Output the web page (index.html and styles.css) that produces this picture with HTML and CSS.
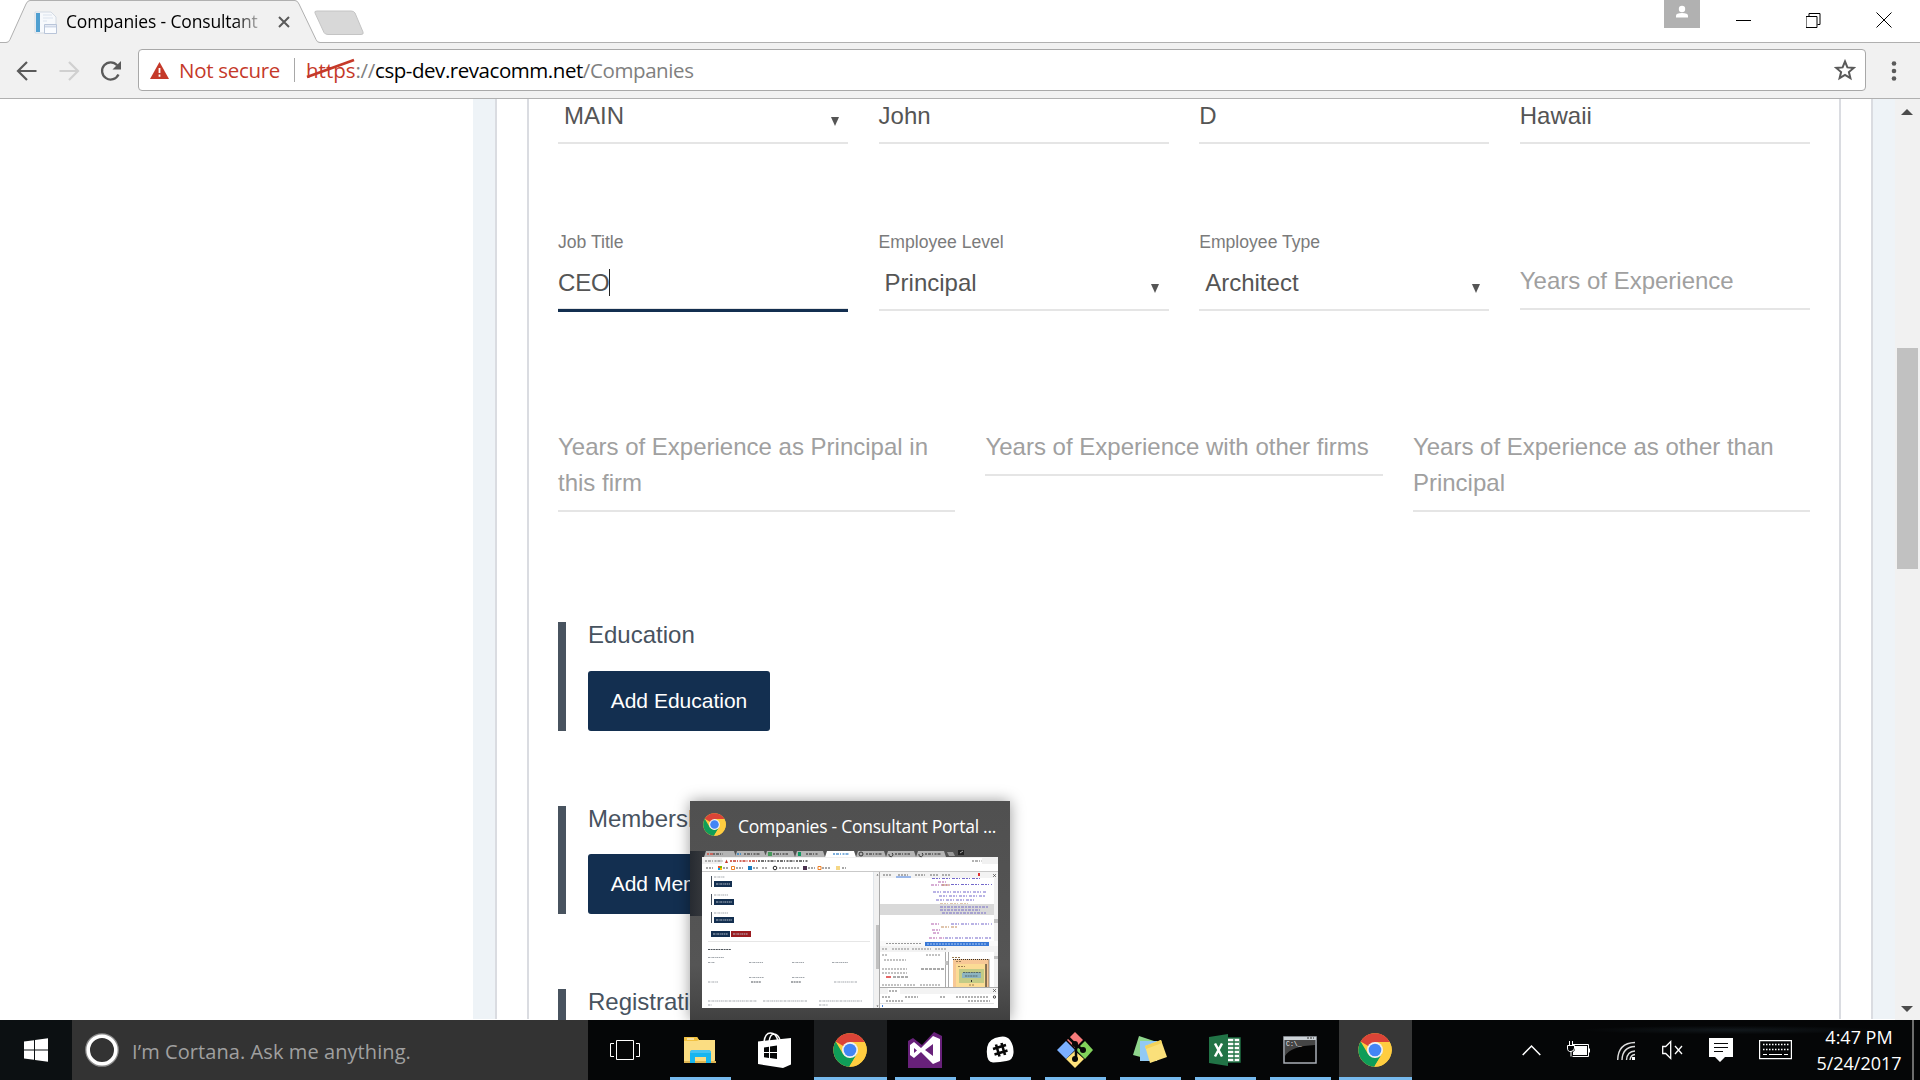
FILE: index.html
```html
<!DOCTYPE html>
<html lang="en">
<head>
<meta charset="utf-8">
<title>Companies - Consultant Portal</title>
<link rel="stylesheet" href="styles.css">
</head>
<body>
<svg class="defs" width="0" height="0" aria-hidden="true">
  <symbol id="chrome" viewBox="0 0 34 34">
    <circle cx="17" cy="17" r="16.7" fill="#ffcd40"/>
    <path d="M17 17 2.6 8.6A16.7 16.7 0 0 1 31.7 9H17z" fill="#db4437"/>
    <path d="M2.6 8.6 10.2 21.3 17 25 24 21 16.3 33.7A16.7 16.7 0 0 1 2.6 8.6z" fill="#0f9d58"/>
    <path d="M17 9h14.7a16.7 16.7 0 0 1-15.4 24.7L23.9 21z" fill="#ffcd40"/>
    <circle cx="17" cy="17" r="8" fill="#f1f1f1"/>
    <circle cx="17" cy="17" r="6.3" fill="#4285f4"/>
  </symbol>
</svg>

<header class="browser">
  <div class="tabstrip">
    <div class="tab">
      <svg class="tab-shape" width="320" height="43"><path d="M0 42.5H6q3 0 4-3L26 4q1.500-3.500 4-3.500H295q2.500 0 4 3.500L316 39.500q1 3 4 3V43H0z" fill="#f1f1f1"/><path d="M0 42.500H6q3 0 4-3L26 4q1.500-3.500 4-3.500H295q2.500 0 4 3.500L316 39.500q1 3 4 3" fill="none" stroke="#b0b0b0"/></svg>
      <svg class="favicon" width="24" height="24"><path d="M1 1h16l5 5v16H1z" fill="#f7f9fc" stroke="#d3dae3"/><path d="M2 2h4v19H2z" fill="#4f9fd0"/><path d="M9 4h9M9 7h10M9 10h4" stroke="#dbe3ee"/><path d="M10.500 13.500h12v9h-12z" fill="#fafcff" stroke="#b9c5d9"/><path d="M11 15.500h11" stroke="#d0d9e8" stroke-width="2"/></svg>
      <span class="tab-title">Companies - Consultant</span>
      <svg class="tab-close" width="12" height="12"><path d="M1 1l10 10M11 1L1 11" stroke="#5a5a5a" stroke-width="2"/></svg>
    </div>
    <svg class="newtab" width="52" height="26"><path d="M3 1H37q3 0 4 2L49 22q1 2.500-2 2.500H14q-3 0-4-2L1 3q-1-2 2-2z" fill="#d8d8d8" stroke="#c4c4c4"/></svg>
    <div class="window-controls">
      <svg class="profile" width="36" height="28"><path d="M0 0h36v28H0z" fill="#b1b1b1"/><circle cx="18" cy="9" r="3.200" fill="#fff"/><path d="M12 17v-1.500q0-2.500 6-2.500t6 2.500V17.500H12z" fill="#fff"/></svg>
      <svg width="16" height="16"><path d="M0 8.500h15" stroke="#000"/></svg>
      <svg width="16" height="16"><path d="M.5 4.500h11v11H.5zM3.500 4V1.500h11v11H12" transform="translate(-.5 0)" fill="none" stroke="#000"/></svg>
      <svg width="16" height="16"><path d="M.5.500l15 15M15.500.500l-15 15" stroke="#000"/></svg>
    </div>
  </div>
  <div class="toolbar">
    <svg class="nav" width="22" height="22"><path d="M20.500 11H2.500M11 2l-9 9 9 9" fill="none" stroke="#5a5a5a" stroke-width="2.200"/></svg>
    <svg class="nav" width="22" height="22"><path d="M1.500 11h18M11 2l9 9-9 9" fill="none" stroke="#d0d0d0" stroke-width="2.200"/></svg>
    <svg class="nav" width="22" height="22"><path d="M18.500 14.500A8.600 8.600 0 1 1 17.200 5.300" fill="none" stroke="#5a5a5a" stroke-width="2.300"/><path d="M21 1v8.500h-8.500z" fill="#5a5a5a"/></svg>
    <div class="omnibox">
      <svg class="warn" width="19" height="17"><path d="M9.500 0 19 17H0z" fill="#c53929"/><path d="M9.500 6v5M9.500 12.500v2.200" stroke="#fff" stroke-width="1.800"/></svg>
      <span class="not-secure">Not secure</span>
      <span class="divider"></span>
      <span class="url"><span class="scheme">https<svg class="strike" width="50" height="22"><path d="M1 19 48 2" stroke="#c53929" stroke-width="2.800"/></svg></span><span class="slashes">://</span><span class="host">csp-dev.revacomm.net</span><span class="path">/Companies</span></span>
      <svg class="star" width="22" height="22"><path d="M11 2.500l2.400 5.900 6.400.500-4.900 4.100 1.500 6.200L11 15.900l-5.400 3.300 1.500-6.200L2.200 8.900l6.400-.500z" fill="none" stroke="#5a5a5a" stroke-width="2"/></svg>
    </div>
    <svg class="menu" width="6" height="20"><circle cx="3" cy="2.500" r="2.300"/><circle cx="3" cy="10" r="2.300"/><circle cx="3" cy="17.500" r="2.300"/></svg>
  </div>
</header>

<main class="viewport">
  <div class="page">
    <div class="panel">
      <div class="card">
        <div class="row four first">
          <div class="field select"><span class="value">MAIN</span><i class="arrow"></i></div>
          <div class="field"><span class="value">John</span></div>
          <div class="field"><span class="value">D</span></div>
          <div class="field"><span class="value">Hawaii</span></div>
        </div>
        <div class="row four second">
          <div><label>Job Title</label><div class="field focus"><span class="value caret">CEO</span></div></div>
          <div><label>Employee Level</label><div class="field select"><span class="value">Principal</span><i class="arrow"></i></div></div>
          <div><label>Employee Type</label><div class="field select"><span class="value">Architect</span><i class="arrow"></i></div></div>
          <div class="field empty unlabeled">Years of Experience</div>
        </div>
        <div class="row three">
          <div class="field empty">Years of Experience as Principal in this firm</div>
          <div class="field empty">Years of Experience with other firms</div>
          <div class="field empty">Years of Experience as other than Principal</div>
        </div>
        <section class="group education"><h3>Education</h3><button>Add Education</button></section>
        <section class="group"><h3>Memberships</h3><button>Add Membership</button></section>
        <section class="group"><h3>Registrations</h3></section>
      </div>
    </div>
  </div>
  <div class="scrollbar">
    <i class="up"></i><div class="thumb"></div><i class="down"></i>
  </div>
</main>

<aside class="preview">
  <div class="preview-head"><svg width="23" height="23"><use href="#chrome"/></svg><span>Companies - Consultant Portal ...</span></div>
  <svg class="thumbnail" width="296" height="158" viewBox="0 0 296 158">
    <path d="M2 7 4 1H32l2 6zM33 7l2-6H62l2 6zM63 7l2-6H91l2 6zM93 7l2-6h26l2 6zM154 7l2-6h26l2 6zM184 7l2-6h26l2 6zM214 7l2-6h26l2 6z" fill="#b4b4b4"/>
    <path d="M245 2h6l2 4h-6z" fill="#999"/><path d="M256 0h6v5h-6z" fill="#222"/><path d="M258 3l3-2" stroke="#aaa"/>
    <path d="M123 7l2-6h27l2 6h142v151H0V7z" fill="#fff"/>
    <path d="M0 7h296v7H0z" fill="#f1f1f1"/><path d="M20 8h260v6H20z" fill="#fff"/>
    <g stroke-width="1.500" stroke-dasharray="2 1 3 1 1 1.500">
      <path d="M11 4h10M42 4h16M71 4h15M104 4h12M164 4h16M193 4h15M223 4h16" stroke="#555"/>
      <path d="M5 4h6" stroke="#d04b40"/><path d="M35 4h4" stroke="#2d7fc1"/><path d="M131 4h16" stroke="#5597d2"/>
      <path d="M28 11h18M47 11h8" stroke="#c53929"/><path d="M56 11h50" stroke="#444"/><path d="M3 11h18M270 11h10" stroke="#999"/>
    </g>
    <path d="M66 2h4v4h-4z" fill="#46985a"/><path d="M96 2h3v4h-3z" fill="#0e9960"/><path d="M157 4a2 2 0 1 0 4 0 2 2 0 1 0-4 0M187 4a2 2 0 1 0 3-1M217 4a2 2 0 1 0 3-1" fill="none" stroke="#333"/>
    <path d="M23 13l1.500-3.500L26 13z" fill="#c53929"/>
    <path d="M16 16h2v2h-2z" fill="#f25022"/><path d="M18 16h2v2h-2z" fill="#7fba00"/><path d="M16 18h2v2h-2z" fill="#00a4ef"/><path d="M18 18h2v2h-2z" fill="#ffb900"/>
    <path d="M29.500 16.500h3v3h-3zM116 16.500h3v3h-3z" fill="none" stroke="#ef7f23"/><path d="M46 16h4v4h-4z" fill="#1679be"/><path d="M101 16h4v4h-4z" fill="#49304d"/><path d="M134 16h4v4h-4z" fill="#f5d785"/><circle cx="73" cy="18" r="1.800" fill="none" stroke="#222"/>
    <path d="M4 18h7M21 18h5M34 18h7M51 18h5M60 18h6M77 18h21M106 18h7M120 18h8M140 18h4" stroke="#8a8a8a" stroke-width="1.500" stroke-dasharray="2 1"/>
    <path d="M0 21.500h296" stroke="#c9c9c9"/>
    <path d="M171 22h6v136h-6z" fill="#f1f1f1"/><path d="M174 75h3v44h-3z" fill="#c1c1c1"/><path d="M175.500 24l1 1.500h-2zM175.500 157l1-1.500h-2z" fill="#555"/>
    <path d="M171.500 22v136" stroke="#e0e5ea"/><path d="M177.500 22v136" stroke="#aaa"/>
    <path d="M9.500 26v11M9.500 44v11M9.500 62v11" stroke="#48515d"/>
    <path d="M12 31h18v6H12zM12 49h20v6H12zM12 67h20v6H12zM9 81h19v6H9z" fill="#132f50"/><path d="M29 81h20v6H29z" fill="#9b1c20"/>
    <path d="M14 34h14M14 52h16M14 70h16M11 84h15M31 84h15" stroke="#b5bec9" stroke-width="1" stroke-dasharray="2 .6 1 .6"/>
    <path d="M12 27h11M12 45h14M12 63h14M6 107.500h16M6 112.500h7M47 112.500h14M90 112.500h12M130 112.500h16M47 127.500h15M90 127.500h13M6 132h10M132 132h23M6 151h49M61 151h44M117 151h43M6 155h4M117 155h9" stroke="#a3a8ad" stroke-width="1.200" stroke-dasharray="2 .6 1 .6"/>
    <path d="M6 99.500h23M49 132h10M89 132h10" stroke="#50565c" stroke-width="1.200" stroke-dasharray="2 .6"/>
    <path d="M6 91.500h162" stroke="#e6e6e6"/>
    <path d="M178 22h118v6H178z" fill="#f3f3f3"/><path d="M181 25h8M196 25h10M213 25h10M228 25h9M240 25h8" stroke="#666" stroke-width="1.200" stroke-dasharray="2 1"/><path d="M194 27h15" stroke="#427ce0"/><path d="M276 23h2v3h-2z" fill="#d33"/><path d="M291 24l3 3M294 24l-3 3" stroke="#333" stroke-width=".6"/>
    <g stroke-width="1.200" stroke-dasharray="3 1 2 1 1 2">
      <path d="M230 28.500h48M249 34.500h41M231 42h54M237 46h46M234 50h40M249 74h41M243 88h46" stroke="#7469cb"/>
      <path d="M229 35h20M236 32h9M229 74h8M230 80h8M231 83h7M227 88h15M230 94h6" stroke="#b25fac"/>
      <path d="M240 35h8M238 54h30M239 77h16M248 92h20" stroke="#bf8c5c"/>
    </g>
    <path d="M178 54h114v11H178z" fill="#d9d9d9"/>
    <path d="M238 57h49M238 60h40M240 63h44" stroke="#766cc7" stroke-width="1.200" stroke-dasharray="3 1 2 1"/>
    <path d="M292 28h4v64h-4z" fill="#f1f1f1"/><path d="M292 69h4v4h-4z" fill="#c1c1c1"/>
    <path d="M178 91h118v5H178z" fill="#fafafa"/><path d="M223 92h64v4h-64z" fill="#3878d6"/><path d="M225 94h60" stroke="#a9c7f3" stroke-dasharray="2 1"/><path d="M184 93.500h36" stroke="#999" stroke-dasharray="2 1"/>
    <path d="M178 96h118v6H178z" fill="#f3f3f3"/><path d="M180 99h6M190 99h17M210 99h19M233 99h12M180 105h5M224 105h14M182 110h22M180 119h25M180 123h25M180 135h19M202 135h12M218 135h20" stroke="#858585" stroke-width="1.200" stroke-dasharray="2 1"/>
    <path d="M184 127h5" stroke="#d33" stroke-width="1.500"/><path d="M191 127h16M219 119h23" stroke="#555" stroke-dasharray="3 1"/>
    <path d="M246.500 102v35M243.500 102v35M178 137.500h118" stroke="#aaa"/><path d="M243 111h3v4h-3z" fill="#c1c1c1"/>
    <path d="M251 109h36v28h-36z" fill="#f7c796"/><path d="M251 109.500h36V137" fill="none" stroke="#333" stroke-dasharray="1 1"/><path d="M254 114h30v23h-30z" fill="#fbdc95"/><path d="M284 114v23" stroke="#111"/><path d="M257 119h25v14h-25z" fill="#c2cb86"/><path d="M260 123h19v5h-19z" fill="#8cb4c0"/><path d="M261 122.500h18M263 126h13" stroke="#52676e" stroke-dasharray="2 .6"/><path d="M250 107.500h8M256 116.500h7M254 111.500h5M267 135h5" stroke="#9a7b51" stroke-dasharray="2 1"/><path d="M269.500 130v2" stroke="#333"/>
    <path d="M292 102h4v35h-4z" fill="#f1f1f1"/><path d="M292 106h4v3h-4z" fill="#c1c1c1"/>
    <path d="M178 138h118v6H178z" fill="#f3f3f3"/><path d="M186 138h12v6h-12z" fill="#fff"/><path d="M187 141h9M180 147h8M203 147h13M238 147h6M254 147h32M266 151h22M184 151h18" stroke="#666" stroke-width="1.200" stroke-dasharray="2 1"/><path d="M178 153.500h114" stroke="#e0e0e0"/><path d="M180 155l1 1-1 1" fill="none" stroke="#3878d6"/><path d="M291 139l3 3M294 139l-3 3" stroke="#333" stroke-width=".6"/><circle cx="292.500" cy="147" r="1.200" fill="none" stroke="#444"/>
  </svg>
</aside>

<footer class="taskbar">
  <div class="start"><svg width="24" height="24"><path d="M0 3.500 10 2.200V11.500H0zM11 2 24 .3V11.500H11zM0 12.500h10v9.300L0 20.400zM11 12.500h13v11.300L11 22z" fill="#fff"/></svg></div>
  <div class="cortana"><svg width="34" height="34"><circle cx="17" cy="17" r="15.600" fill="none" stroke="#8d8d8d" stroke-width="2.500"/><circle cx="17" cy="17" r="13.800" fill="none" stroke="#fff" stroke-width="3.600"/></svg><span>I’m Cortana. Ask me anything.</span></div>
  <div class="apps">
    <div class="app"><svg width="30" height="20"><path d="M6.500.500h17v19h-17zM4 3.500H.500v13H4M26 3.500h3.500v13H26" fill="none" stroke="#fff"/></svg></div>
    <div class="app open"><svg width="34" height="30"><path d="M1 3q0-1 1-1h12l2 3h16v20q0 2-2 2H1z" fill="#fbdd82"/><path d="M1 6V3q0-1 1-1h12l2 3-2 1z" fill="#f3c242"/><path d="M4 4h7" stroke="#fff"/><path d="M1 26h32v2H1z" fill="#dfb653"/><path d="M7 28V18q0-3 3-3h15q3 0 3 3v10h-5v-6H12v6z" fill="#17b5ef"/><path d="M7 18q0-3 3-3h15q3 0 3 3z" fill="#46c2f2"/></svg></div>
    <div class="app"><svg width="33" height="36"><path d="M0 9.500 33 6v26.500L25 36 0 32z" fill="#fff"/><path d="M6 10Q7 1 12.500 1T20 9M11 10Q12 2 16 2t6 6" fill="none" stroke="#fff" stroke-width="1.500"/><path d="M6 15.500l5-.700V20H6zM12 14.500l7-1V20h-7zM6 21h5v5l-5-.700zM12 21h7v6l-7-1z" fill="#050607"/></svg></div>
    <div class="app open wide"><svg width="34" height="34"><use href="#chrome"/></svg></div>
    <div class="app open"><svg width="34" height="36"><path d="M0 9l5-3 9 7L26 0l8 4v32H0z" fill="#68217a"/><path d="M2 13l4-3 7 6L25 4l7 3v22l-7 3-12-12-7 6-4-3zm4 3v5l3-2.500zM25 12l-8 6 8 6z" fill="#fff" fill-rule="evenodd"/></svg></div>
    <div class="app open"><svg width="28" height="28"><path d="M9 2Q20-2 24 4t3.500 13-7 8-13 1.500T.8 16 9 2z" fill="#fff"/><path d="M10 8.500l3.500 12M15.500 7l3.500 12M7 13l13-4M8.500 18.500l13-4" stroke="#080808" stroke-width="2.600"/></svg></div>
    <div class="app open"><svg width="36" height="36"><path d="M18 0l8 8-8 8-8-8z" fill="#f77b7b"/><path d="M28 9l8 9-8 9-9-9z" fill="#82d35b"/><path d="M18 19l9 8-9 9-9-9z" fill="#ffe27b"/><path d="M9 9l9 9-9 9-9-9z" fill="#7cb0ff"/><path d="M11 5l8 8v15M18 12l8 6" fill="none" stroke="#080808" stroke-width="2.500"/><circle cx="18" cy="12" r="3" fill="#080808"/><circle cx="18" cy="27" r="3" fill="#080808"/><circle cx="26" cy="18" r="3" fill="#080808"/></svg></div>
    <div class="app open"><svg width="34" height="28"><path d="M6 0l15 5-6 18L0 19z" fill="#8fd58c"/><path d="M7 5h17v20H7z" fill="#92c9f3"/><path d="M12 10l16-6 6 17-17 6z" fill="#fbe07a"/><path d="M12 10l16-6 1 3-16 6z" fill="#f5d359"/></svg></div>
    <div class="app open"><svg width="32" height="32"><path d="M18 4h13v24H18z" fill="#fff" stroke="#1f7244" stroke-width="1.500"/><path d="M19 8h11M19 12h11M19 16h11M19 20h11M19 24h11M25 5v22" stroke="#1f7244" stroke-width="1.300"/><path d="M0 3l19-3v32L0 29z" fill="#217346"/><path d="M6 9.500l7 13M13 9.500l-7 13" stroke="#fff" stroke-width="2.500"/></svg></div>
    <div class="app open"><svg width="34" height="28"><path d="M1 1h32v26H1z" fill="#050505" stroke="#a9afb6" stroke-width="1.500"/><path d="M1 1h32v3H1z" fill="#ccd2d7"/><path d="M2 4h30v5Q8 10 2 20z" fill="#454545"/><path d="M24 2h7" stroke="#333" stroke-dasharray="2 1"/><text x="3" y="10" fill="#eee" font-size="6.500" font-family="Liberation Mono, monospace">C:\_</text></svg></div>
    <div class="app open wide active"><svg width="34" height="34"><use href="#chrome"/></svg></div>
  </div>
  <div class="tray">
    <svg width="19" height="36"><path d="M.700 23l8.800-9 8.800 9" fill="none" stroke="#fff" stroke-width="1.500"/></svg>
    <svg width="24" height="36"><path d="M5.500 12.500h16v12h-16M22.500 16.500v4" fill="none" stroke="#fff"/><path d="M8 14h12v9H6v-3q2-1 2-3z" fill="#fff"/><path d="M2.500 9v4M5.500 9v4M.500 13.500h7V16q0 3-3.500 3.500T.500 16zM4 19v5.500" fill="#050607" stroke="#fff"/></svg>
    <svg width="19" height="36"><path d="M.700 28Q1 11 18 10.500M5 28Q5.500 15 18 14.500M9.500 28Q10 19.500 18 19M13 28q.500-5 5-5.500" fill="none" stroke="#ddd" stroke-width="1.400"/><path d="M15 25h3v3h-3z" fill="#fff"/></svg>
    <svg width="21" height="36"><path d="M.700 14.500h3l5-5v17l-5-5h-3zM13 14l7 8M20 14l-7 8" fill="none" stroke="#fff" stroke-width="1.300"/></svg>
    <svg width="24" height="36"><path d="M0 6h24v19H16l-5 5-5-5H0z" fill="#fff"/><path d="M5 11.500h14M5 15.500h14M5 19.500h9" stroke="#080808"/></svg>
    <svg width="33" height="36"><path d="M.600 8.600h31.800v18H.600z" fill="none" stroke="#fff" stroke-width="1.200"/><path d="M4 12.500h26M4 17.500h26" stroke="#fff" stroke-width="1.500" stroke-dasharray="1.500 1.500"/><path d="M4 22.500h4M10 22.500h13M25 22.500h4" stroke="#fff"/></svg>
    <div class="clock"><span>4:47 PM</span><span>5/24/2017</span></div>
    <i class="show-desktop"></i>
  </div>
</footer>
</body>
</html>
```
FILE: styles.css
```css
* { box-sizing: border-box; }
body { margin: 0; width: 1920px; height: 1080px; overflow: hidden; display: flex; flex-direction: column; background: #fff; font-family: "Liberation Sans", Arial, sans-serif; }
svg { display: block; flex: none; }
.defs { position: absolute; }

/* Browser chrome */
.browser { height: 99px; flex: none; font-family: "Open Sans", "Noto Sans", sans-serif; }
.tabstrip { height: 43px; display: flex; border-bottom: 1px solid #b0b0b0; }
.tab { position: relative; width: 320px; height: 43px; display: flex; align-items: flex-start; padding-left: 34px; }
.tab-shape { position: absolute; left: 0; top: 0; }
.favicon { position: relative; margin-top: 11px; }
.tab-title { position: relative; margin-left: 8px; width: 200px; font-size: 17.500px; line-height: 26px; margin-top: 8px; letter-spacing: -.15px; white-space: nowrap; background: linear-gradient(90deg, #000 168px, #aaa 192px); -webkit-background-clip: text; background-clip: text; color: transparent; }
.tab-close { position: relative; margin: 16px 0 0 12px; }
.newtab { margin: 10px 0 0 -6px; }
.window-controls { margin-left: auto; display: flex; gap: 54px; padding-right: 28px; }
.window-controls svg { margin-top: 12px; }
.window-controls .profile { margin: 0 -18px 0 0; }
.toolbar { height: 56px; background: #f1f1f1; border-bottom: 1px solid #b0b0b0; display: flex; align-items: center; padding: 0 0 0 16px; }
.nav { margin-right: 20px; }
.nav:nth-child(3) { margin-right: 16px; }
.omnibox { width: 1728px; height: 42px; margin-top: -1px; border: 1px solid #a8a8a8; border-radius: 4px; background: #fff; display: flex; align-items: center; padding: 0 9px 0 11px; font-size: 20.500px; line-height: 30px; white-space: nowrap; }
.not-secure { width: 104px; margin-left: 10px; color: #c53929; letter-spacing: -.3px; }
.divider { width: 1px; height: 24px; margin: 0 11px 0 11px; background: #a8a8a8; }
.url { display: flex; color: #808080; }
.scheme { position: relative; color: #c53929; }
.strike { position: absolute; left: 0; top: 3px; }
.slashes { letter-spacing: -.3px; }
.host { color: #000; letter-spacing: -.45px; }
.path { letter-spacing: -.4px; }
.star { margin-left: auto; }
.menu { margin-left: 25px; fill: #5a5a5a; }

/* Page */
.viewport { height: 921px; flex: none; display: flex; overflow: hidden; }
.page { width: 1895px; padding-left: 473px; }
.panel { height: 921px; border: solid #eef3f7; border-width: 0 22px; background: #dadce1; padding: 0 2px; }
.card { height: 921px; background: linear-gradient(90deg, #fff 30px, #dadce1 30px, #dadce1 32px, #fff 32px, #fff 1342px, #dadce1 1342px, #dadce1 1344px, #fff 1344px); padding: 0 61px; }
.row { display: grid; column-gap: 30.400px; align-items: start; }
.four { grid-template-columns: repeat(4, 1fr); }
.three { grid-template-columns: repeat(3, 1fr); padding-top: 71px; }
.first { margin-top: -1px; height: 46px; }
.second { padding-top: 86px; height: 214px; }
label { display: block; height: 24px; line-height: 24px; font-size: 17.600px; color: #7b7b7b; margin-bottom: 11px; }
.field { height: 46px; border-bottom: 2px solid #e5e5e5; font-size: 24px; line-height: 36px; color: #555; display: flex; justify-content: space-between; }
.select { padding: 0 9.500px 0 6px; }
.arrow { width: 0; height: 0; margin-top: 19px; border: solid transparent; border-width: 9px 4.500px 0; border-top-color: #555; }
.focus { height: 47px; border-bottom: 3px solid #132f50; background: linear-gradient(#e5e5e5, #e5e5e5) 0 43px / 100% 1px no-repeat; }
.caret { height: 27px; margin: 4px 0 0; line-height: 28px; letter-spacing: -.2px; border-right: 1px solid #222; }
.empty { display: block; height: auto; padding-bottom: 9px; color: #a0a0a0; }
.unlabeled { margin-top: 33px; }
.group { border-left: 8px solid #48535f; padding-left: 22px; height: 108px; margin-bottom: 75px; }
.education { margin-top: 110px; height: 109px; }
h3 { margin: 0; height: 49px; line-height: 25px; font-size: 24px; font-weight: 400; color: #48535f; }
.group:not(.education) h3 { height: 48px; }
button { display: block; height: 60px; padding: 0 22.700px; border: 0; border-radius: 3px; background: #132f50; color: #fff; font: 21px/60px "Liberation Sans", Arial, sans-serif; white-space: nowrap; }
.scrollbar { width: 25px; background: #f1f1f1; display: flex; flex-direction: column; align-items: center; padding: 10px 1px 8px 0; }
.up { border: solid transparent; border-width: 0 6px 6px; border-bottom-color: #4c4c4c; }
.thumb { width: 21px; height: 221px; margin: 233px -1px 0 0; background: #c1c1c1; }
.down { margin-top: auto; border: solid transparent; border-width: 6px 6px 0; border-top-color: #4c4c4c; }

/* Window preview floating above the taskbar */
.preview { position: absolute; left: 690px; top: 801px; width: 320px; height: 219px; padding: 0 12px; background: linear-gradient(90deg, rgba(28,33,41,.8), transparent 40px) 0 50px / 100% 65px no-repeat, linear-gradient(#505050, #555 75%, #4a4a4a 90%, #404040); box-shadow: 0 0 14px rgba(0,0,0,.4); }
.preview-head { height: 49px; display: flex; align-items: center; gap: 12px; padding-left: 1px; color: #fff; font: 17.500px/30px "Open Sans", "Noto Sans", sans-serif; letter-spacing: -.25px; white-space: nowrap; }
.preview-head svg { margin-top: -2px; }

/* Taskbar */
.taskbar { position: relative; height: 60px; flex: none; display: flex; background: radial-gradient(ellipse at 1730px 10px, #12181c, transparent 150px), #050607; font-family: "Open Sans", "Noto Sans", sans-serif; }
.start { width: 72px; display: flex; align-items: center; justify-content: center; background: #0c1012; }
.cortana { width: 516px; background: #333; display: flex; align-items: center; padding-left: 13px; gap: 13px; color: #a0a0a0; font-size: 20px; letter-spacing: .08px; white-space: nowrap; }
.cortana span { margin-top: 3px; }
.apps { display: flex; }
.app { width: 75px; height: 60px; display: flex; align-items: center; justify-content: center; padding-right: 2px; background: linear-gradient(#76b9ed, #76b9ed) 50% 100% / 0 3px no-repeat; }
.open { background-size: 61px 3px; }
.wide { width: 73px; margin: 0 1px; background-size: 73px 3px; background-color: #1c1e20; }
.active { background-color: #373737; }
.tray { margin-left: auto; display: flex; align-items: center; padding-right: 6px; }
.tray > svg { margin-right: 26px; }
.tray > svg:nth-child(6) { margin-right: 20px; }
.clock { width: 94px; display: flex; flex-direction: column; align-items: center; font-size: 18px; line-height: 26px; color: #fff; margin-right: 6px; }
.show-desktop { width: 2px; height: 60px; background: #6d6d6d; }
```
